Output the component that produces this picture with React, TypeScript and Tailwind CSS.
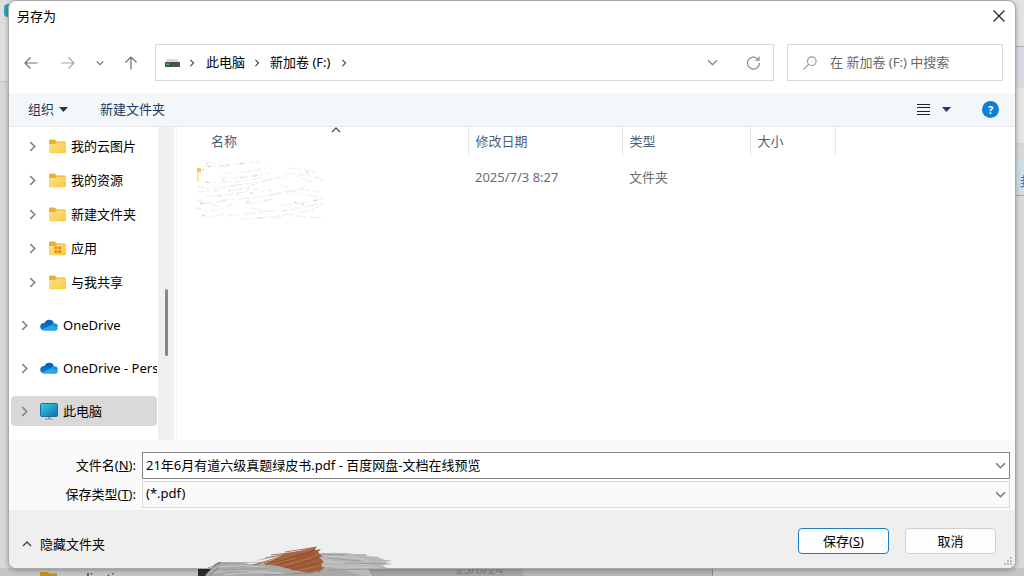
import { useState } from 'react';
import type { ReactNode } from 'react';

type TreeNode = {
  label: string;
  icon: 'folder' | 'apps' | 'cloud' | 'pc';
};

const folders: TreeNode[] = [
  { label: '我的云图片', icon: 'folder' },
  { label: '我的资源', icon: 'folder' },
  { label: '新建文件夹', icon: 'folder' },
  { label: '应用', icon: 'apps' },
  { label: '与我共享', icon: 'folder' },
];

const roots: TreeNode[] = [
  { label: 'OneDrive', icon: 'cloud' },
  { label: 'OneDrive - Personal', icon: 'cloud' },
  { label: '此电脑', icon: 'pc' },
];

type ChevronProps = { dir: 'up' | 'down' | 'right'; className?: string };

function Chevron({ dir, className = 'w-2.5 h-2.5' }: ChevronProps) {
  const paths = {
    up: 'M1 7l4-4 4 4',
    down: 'M1 3l4 4 4-4',
    right: 'M3 1l4 4-4 4',
  };
  return (
    <svg viewBox="0 0 10 10" className={`shrink-0 ${className}`} fill="none" stroke="currentColor" strokeWidth="1.4">
      <path d={paths[dir]} />
    </svg>
  );
}

function Caret() {
  return (
    <svg viewBox="0 0 9 5" className="w-[9px] h-[5px]" fill="#1e395b">
      <path d="M0 0h9L4.500 5z" />
    </svg>
  );
}

function FolderIcon({ apps = false }: { apps?: boolean }) {
  return (
    <svg viewBox="0 0 17 15" className="w-[17px] h-[15px] shrink-0">
      <defs>
        <linearGradient id="folder" x1="0" y1="0" x2="1" y2="1">
          <stop offset="0" stopColor="#ffe08a" />
          <stop offset="1" stopColor="#fbc940" />
        </linearGradient>
      </defs>
      <path d="M0 2a1.500 1.500 0 0 1 1.500-1.500h4.200l2 2H15.500A1.500 1.500 0 0 1 17 4v4H0z" fill="#e9b12c" />
      <path d="M0 5h6.200l2-1.500H17v9.500a1.300 1.300 0 0 1-1.300 1.300H1.300A1.300 1.300 0 0 1 0 13z" fill="url(#folder)" />
      {apps && <path d="M5.500 5.500h2.800v2.800H5.500zM9.300 5.500h2.800v2.800H9.300zM5.500 9.300h2.800v2.800H5.500zM9.300 9.300h2.800v2.800H9.300z" fill="#d98f12" />}
    </svg>
  );
}

function CloudIcon() {
  return (
    <svg viewBox="0 0 18 12" className="w-[18px] h-3 shrink-0">
      <path d="M4.500 4.200A5 5 0 0 1 13.900 4L9 8z" fill="#0364b8" />
      <path d="M3.800 4a4 4 0 0 1 3 .6L11 7.200 2 11A3.800 3.800 0 0 1 .2 7.600 3.900 3.900 0 0 1 3.800 4z" fill="#0f6fc9" />
      <path d="M10.500 6.800l2-2.100a4 4 0 0 1 1.500-.4 3.700 3.700 0 0 1 3.900 3.300L16 9z" fill="#1490df" />
      <path d="M1.500 10.400L10 6.800l7.900 1.600a3.500 3.500 0 0 1-3.400 3.400H4a4 4 0 0 1-2.500-1.400z" fill="#28a8ea" />
    </svg>
  );
}

function PcIcon() {
  return (
    <svg viewBox="0 0 18 17" className="w-[18px] h-[17px] shrink-0">
      <defs>
        <linearGradient id="screen" x1="0" y1="0" x2="1" y2="1">
          <stop offset="0" stopColor="#35d5e0" />
          <stop offset="1" stopColor="#1267b5" />
        </linearGradient>
      </defs>
      <path d="M8 13h2v2.500h3v1H5v-1h3z" fill="#8f9498" />
      <rect x="0.500" y="0.500" width="17" height="13" rx="1" fill="url(#screen)" stroke="#1f6f92" />
    </svg>
  );
}

function NodeIcon({ icon }: { icon: TreeNode['icon'] }) {
  if (icon === 'cloud') return <CloudIcon />;
  if (icon === 'pc') return <PcIcon />;
  return <FolderIcon apps={icon === 'apps'} />;
}

function Arrow({ className }: { className: string }) {
  return (
    <svg viewBox="0 0 14 14" className={`w-3.5 h-3.5 ${className}`} fill="none" stroke="currentColor" strokeWidth="1.2">
      <path d="M13.500 7H1M6.500 1.500L1 7l5.500 5.500" />
    </svg>
  );
}

// Rubbed-out file name
function ErasedName() {
  return (
    <svg viewBox="0 0 134 64" className="absolute left-[17px] top-0.5 w-[134px] h-16" fill="none">
      <path d="M3 13h4v2H5v9H3z" fill="#fae7b0" />
      <path d="M3 10h4v4H3zM8 11h2v1H8z" fill="#ecc766" />
      <g stroke="#e4e4e4" strokeWidth="0.700" strokeDasharray="7 2 3 4 12 3">
        <path d="M11 2q10 5 20 6M9 8q20 2 40-4M46 6l20-2M30 15q22 0 45-6M26 19q26 2 50-4M10 24q30 2 60-5M20 29q40-2 82-14M94 10q20 1 30 6M104 17q12 0 26 5M92 14l26 10" />
        <path d="M3 34q20-1 40-8M12 38q28-1 52-7M28 42q38-1 68-10M76 37q20-2 36-9M38 33l48-14M4 28l20 6M88 28l36 6M96 33l34 8" />
        <path d="M3 42l20 6M6 46l30-4M16 52q14 0 24-8M52 46q18-1 28-6M56 50q14 4 34 3M86 47q20 0 40-6M96 52l34-7M2 50l18 4" />
        <path d="M6 59q10 1 24-3M34 58l42-5M46 61l42-2M88 57q20-1 38-9M100 58l28 2" />
      </g>
      <g stroke="#bdbdbd" strokeWidth="0.700" strokeDasharray="3 9 1 6 2 11">
        <path d="M12 5l14 10M14 9l46-5M28 22l40-5M24 38q40-2 62-8M6 45l12 4M52 44q14-1 26-3M8 57l16 3M100 44l20 9M112 14l14 6M34 33l26-3M64 60l32-3M12 24l8 3M90 53l36-12" />
      </g>
    </svg>
  );
}

// Brush strokes over the bottom edge of the dialog
function BrushMarks() {
  return (
    <svg viewBox="0 0 190 30" className="absolute bottom-0 left-[205px] w-[190px] h-[30px] pointer-events-none" fill="none">
      <path d="M108 9l12-2 24 0 3 1h14l1 2 14 1-4 1 13 3-5 1 5 2-10 1 8 3-20 0 4 8H100z" fill="#b8b8b8" />
      <path d="M0 30l7-8 5-5 8-1 26 2 30-1 40 3 20 3 22 7z" fill="#a9a9a8" />
      <g stroke="#b8b8b8" strokeWidth="0.900">
        <path d="M108 8q22-2 46 1M130 10l48 3M140 16l46 2M148 13l38 2M74 10l-20 4M56 16l-32 1M134 20l46-1" />
      </g>
      <path d="M58 18l14-6 6-4 16-3 8-2 9-2-1 3 6-1-3 3 5 5-4 0 5 5-3 2 3 4-5 4-3-1-6 2-12-2-20-5z" fill="#a1603c" />
      <g stroke="#a66a49" strokeWidth="0.900">
        <path d="M48 19l40-12M60 12l44-8M66 9l26-3M80 6l32-5M52 18l24-5" />
      </g>
      <g stroke="#8e4b27" strokeWidth="0.900">
        <path d="M66 17q26-5 44-13M72 19q22-6 38-12M80 22q18-5 34-11M86 24l28-7M70 14l28-7" />
      </g>
      <g stroke="#b97b58" strokeWidth="0.700">
        <path d="M74 13q20-6 34-10M80 19l30-8M90 25l24-5M62 19l30-7" />
      </g>
      <g stroke="#cbcbcb" strokeWidth="0.800">
        <path d="M14 21q24-3 46 0M8 27q28-6 54-2M18 29q30-4 62-1M30 24l46 3M122 11q28-1 42 4M118 15l50 4M116 20l60 2" />
      </g>
      <g stroke="#8d8d8d" strokeWidth="0.700">
        <path d="M12 17l30 0M18 24l44-1M58 29l48-2M122 12l34 3M124 24l40-1M110 8l30 1M138 17l42 1M86 28l30-2" />
      </g>
      <g stroke="#666" strokeWidth="0.700">
        <path d="M0 29l9-9 6-3M4 30l9-8M9 19l7-3M3 22l8-3" />
      </g>
    </svg>
  );
}

// The windows left open behind the dialog
function Backdrop() {
  return (
    <div className="absolute inset-0 -z-10 overflow-hidden bg-[#d9d9d9]" aria-hidden="true">
      <div className="absolute left-0 top-0 w-4 h-[82px] bg-[#dfdfdf] border-b border-[#c6c6c6]" />
      <div className="absolute left-1 top-1 w-4 h-[13px] rounded-sm bg-[#2da3b8]" />
      <div className="absolute right-0 top-0 w-4 h-[47px] bg-[#e3e3e3] border-b border-[#b3b3b3]" />
      <div className="absolute right-0 top-[47px] w-4 h-[41px] bg-[#d9dde2]" />
      <div className="absolute right-0 top-[88px] w-4 h-[57px] bg-[#e4e4e4] border-b-2 border-[#d3d3d3]" />
      <div className="absolute right-0 top-[157px] w-4 h-[39px] bg-[#cfdee2] border-b border-[#9fa5a8]" />
      <span className="absolute left-[1020px] top-[172px] text-[13px] leading-[18px] text-[#1f83d6]">封</span>
      <div className="absolute inset-x-0 bottom-0 h-2 flex bg-[#bcbdbe]">
        <div className="w-[198px] bg-[#c4c4c4]" />
        <div className="w-8 bg-[#2d2d2d]" />
        <div className="w-[293px] bg-[#a5a5a5]" />
        <div className="w-[190px] bg-[#b4b4b4] border-r border-[#8d8d8d]" />
        <div className="flex-1 bg-[#c3c4c6]" />
      </div>
      <svg viewBox="0 0 17 8" className="absolute left-10 bottom-0 w-[17px] h-1" preserveAspectRatio="none">
        <path d="M0 0h7l3 3h7v5H0z" fill="#c1920f" />
      </svg>
      <span className="absolute left-[63px] top-[569px] text-[13px] leading-[18px] text-[#222]">application</span>
      <span className="absolute left-[456px] top-[560px] text-[13px] leading-[18px] text-[#858585]">25/6/24</span>
    </div>
  );
}

function TreeItem({ node, nested = false, selected = false }: { node: TreeNode; nested?: boolean; selected?: boolean }) {
  return (
    <li>
      <button
        className={`flex items-center w-full text-left whitespace-nowrap overflow-hidden rounded-sm ${
          nested ? 'h-[34px] pl-4 gap-[11px]' : 'h-[30px] pl-2 gap-2.5'
        } ${selected ? 'bg-[#d9d9d9]' : ''}`}
      >
        <Chevron dir="right" className="w-[11px] h-[11px] text-[#808080]" />
        <span className="flex items-center gap-[5px]">
          <NodeIcon icon={node.icon} />
          {node.label}
        </span>
      </button>
    </li>
  );
}

function FieldRow({ id, label, hotkey, children }: { id: string; label: string; hotkey: string; children: ReactNode }) {
  return (
    <div className="flex items-center">
      <label htmlFor={id} className="w-[133px] pr-1.5 text-right shrink-0">
        {label}(<u>{hotkey}</u>):
      </label>
      <div className="relative flex-1">{children}</div>
    </div>
  );
}

export default function App() {
  const [fileName, setFileName] = useState('21年6月有道六级真题绿皮书.pdf - 百度网盘-文档在线预览');
  const [search, setSearch] = useState('');

  return (
    <div className="relative isolate overflow-hidden min-h-screen flex flex-col text-[13px] leading-[17px] text-black font-['Noto_Sans','Noto_Sans_CJK_SC',sans-serif]">
      <Backdrop />

      <div
        role="dialog"
        aria-labelledby="title"
        className="flex-1 flex flex-col mx-2 mb-[7px] rounded-lg border border-[#a9a9a9] bg-white overflow-hidden shadow-[0_1px_5px_rgba(0,0,0,0.3)]"
      >
        <div className="flex items-center justify-between h-[30px] pl-2 pr-2.5">
          <h1 id="title">另存为</h1>
          <button aria-label="关闭">
            <svg viewBox="0 0 12 12" className="w-3 h-3" stroke="#222" strokeWidth="1.2">
              <path d="M0.500 0.500l11 11M11.500 0.500l-11 11" />
            </svg>
          </button>
        </div>

        {/* Navigation */}
        <div className="flex items-center pt-[13px] pb-3 pl-0.5 pr-3">
          <button className="flex justify-center w-10" aria-label="返回">
            <Arrow className="text-[#707070]" />
          </button>
          <button className="flex justify-center w-[34px]" aria-label="前进">
            <Arrow className="rotate-180 text-[#a6a6a6]" />
          </button>
          <button className="flex justify-center w-[30px]" aria-label="最近浏览的位置">
            <Chevron dir="down" className="w-2 h-2 text-[#707070]" />
          </button>
          <button className="flex justify-center w-8 mr-2" aria-label="上移">
            <Arrow className="rotate-90 text-[#707070]" />
          </button>

          <nav className="flex flex-1 items-center h-[37px] border border-[#d9d9d9] pl-[9px] pr-3" aria-label="地址">
            <svg viewBox="0 0 15 8" className="w-[15px] h-2">
              <path d="M2.500 0h10L15 3.500H0z" fill="#d9d9d9" />
              <rect y="3" width="15" height="5" rx="0.800" fill="#4b4f4d" />
              <rect x="1.500" y="4.500" width="2.500" height="1.500" fill="#4ed34e" />
            </svg>
            <Chevron dir="right" className="w-2 h-2 ml-2 text-[#444]" />
            <button className="ml-2.5">此电脑</button>
            <Chevron dir="right" className="w-2 h-2 ml-2 text-[#444]" />
            <button className="ml-[9px]">新加卷 (F:)</button>
            <Chevron dir="right" className="w-2 h-2 ml-2.5 text-[#444]" />
            <button className="ml-auto mr-7" aria-label="展开地址">
              <Chevron dir="down" className="w-[11px] h-[11px] text-[#8c8c8c]" />
            </button>
            <button aria-label="刷新">
              <svg viewBox="0 0 15 15" className="w-[15px] h-[15px]" fill="none" stroke="#8a8a8a" strokeWidth="1.200">
                <path d="M13.500 8a6 6 0 1 1-2-4.400l1.500 1.400M13 1.500v3.700H9.300" />
              </svg>
            </button>
          </nav>

          <label className="flex items-center w-[216px] h-[37px] ml-[13px] pl-[15px] gap-[13px] border border-[#d9d9d9]">
            <svg viewBox="0 0 14 14" className="w-3.5 h-3.5 shrink-0" fill="none" stroke="#999" strokeWidth="1.100">
              <circle cx="8.800" cy="5.200" r="4.300" />
              <path d="M5.800 8.200L0.500 13.500" />
            </svg>
            <input
              type="search"
              aria-label="搜索"
              value={search}
              onChange={(e) => setSearch(e.target.value)}
              placeholder="在 新加卷 (F:) 中搜索"
              className="w-full min-w-0 outline-none placeholder:text-[#686868]"
            />
          </label>
        </div>

        {/* Commands */}
        <div className="flex items-center h-[34px] pl-[19px] pr-4 bg-[#f4f7f9] border-b border-[#e6e9ec] text-[#1e395b]">
          <button className="flex items-center gap-[5px]">
            组织
            <Caret />
          </button>
          <button className="ml-8">新建文件夹</button>
          <button className="flex items-center gap-3 ml-auto" aria-label="更改视图">
            <svg viewBox="0 0 13 12" className="w-[13px] h-3" stroke="#222" strokeWidth="1">
              <path d="M0 0.500h13M0 3.500h13M0 7.500h13M0 10.500h13" />
            </svg>
            <Caret />
          </button>
          <button
            className="flex items-center justify-center w-[17px] h-[17px] ml-[31px] rounded-full bg-[#0c7fd6] text-white text-[11px] font-bold"
            aria-label="帮助"
          >
            ?
          </button>
        </div>

        <div className="flex flex-1">
          {/* Folder tree */}
          <aside className="w-[149px] shrink-0 pt-0.5 pl-0.5 pr-px pb-3.5 overflow-hidden">
            <ul>
              {folders.map((node) => (
                <TreeItem key={node.label} node={node} nested />
              ))}
            </ul>
            <ul className="flex flex-col gap-[13px] mt-[11px]">
              {roots.map((node) => (
                <TreeItem key={node.label} node={node} selected={node.icon === 'pc'} />
              ))}
            </ul>
          </aside>
          <div className="flex w-4 shrink-0 justify-center pt-[162px] bg-[#f0f0f0]">
            <div className="w-[3px] h-[67px] rounded-full bg-[#868686]" />
          </div>

          {/* File list */}
          <main className="relative flex-1 ml-0.5 border-l border-[#f3f3f3]">
            <span className="absolute left-[154px] -top-0.5 text-[#555]">
              <Chevron dir="up" />
            </span>
            <table className="w-full table-fixed text-left">
              <thead className="text-[#4c607a]">
                <tr className="h-[29px]">
                  <th className="w-[291px] pl-[34px] border-r border-[#e3e6e9] font-normal">名称</th>
                  <th className="w-[154px] pl-[7px] border-r border-[#e3e6e9] font-normal">修改日期</th>
                  <th className="w-32 pl-[7px] border-r border-[#e3e6e9] font-normal">类型</th>
                  <th className="w-[85px] pl-[7px] border-r border-[#e3e6e9] font-normal">大小</th>
                  <th></th>
                </tr>
              </thead>
              <tbody className="text-[#6d6d6d]">
                <tr className="h-[42px]">
                  <td className="relative">
                    <ErasedName />
                  </td>
                  <td className="pl-[7px]">2025/7/3 8:27</td>
                  <td className="pl-[7px]">文件夹</td>
                  <td></td>
                  <td></td>
                </tr>
              </tbody>
            </table>
          </main>
        </div>

        {/* File name and type */}
        <div className="flex flex-col gap-0.5 pt-3 pb-0.5 pr-[5px] bg-[#fafafa]">
          <FieldRow id="file-name" label="文件名" hotkey="N">
            <input
              id="file-name"
              value={fileName}
              onChange={(e) => setFileName(e.target.value)}
              className="block w-full h-[27px] pl-[3px] pr-6 pb-0.5 bg-white border border-[#858585] outline-none"
            />
            <button className="absolute right-1 top-2" aria-label="历史文件名">
              <Chevron dir="down" className="w-[11px] h-[11px] text-[#777]" />
            </button>
          </FieldRow>
          <FieldRow id="file-type" label="保存类型" hotkey="T">
            <select
              id="file-type"
              className="block w-full h-[27px] pl-[3px] pr-6 pb-0.5 appearance-none bg-[#fafafa] border border-[#d9d9d9] outline-none"
            >
              <option>(*.pdf)</option>
            </select>
            <span className="absolute right-1 top-2 pointer-events-none">
              <Chevron dir="down" className="w-[11px] h-[11px] text-[#777]" />
            </span>
          </FieldRow>
        </div>

        <footer className="relative flex items-end gap-4 pt-[18px] pb-3.5 pl-[13px] pr-[19px] bg-[#efefef]">
          <button className="flex items-center h-5 mr-auto gap-2">
            <Chevron dir="up" className="w-2.5 h-2.5 text-[#444]" />
            隐藏文件夹
          </button>
          <button className="w-[91px] h-[26px] rounded border border-[#1a7dc8] bg-[#fdfdfd]">
            保存(<u>S</u>)
          </button>
          <button className="w-[91px] h-[26px] rounded border border-[#cfcfcf] bg-[#fdfdfd]">取消</button>
          <svg viewBox="0 0 8 8" className="absolute right-[3px] bottom-[3px] w-2 h-2" fill="#bdbdbd">
            <path d="M6 0h2v2H6zM3 3h2v2H3zM6 3h2v2H6zM0 6h2v2H0zM3 6h2v2H3zM6 6h2v2H6z" />
          </svg>
        </footer>
      </div>

      <BrushMarks />
    </div>
  );
}
